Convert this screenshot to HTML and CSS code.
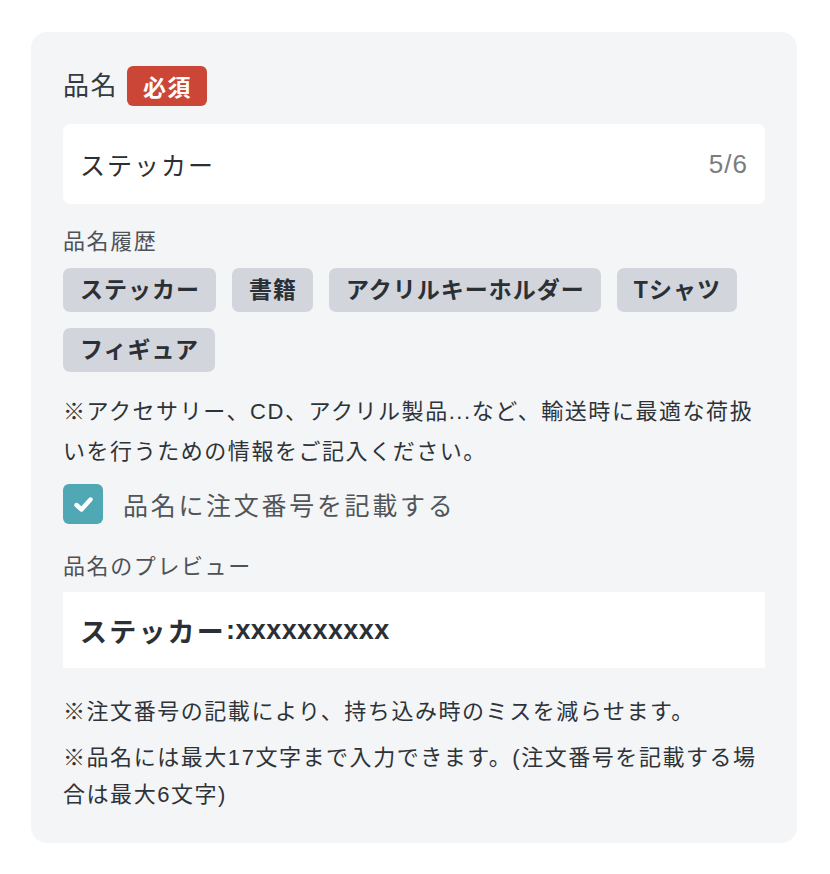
FILE: index.html
```html
<!DOCTYPE html>
<html lang="ja">
<head>
<meta charset="utf-8">
<title>品名</title>
<link rel="stylesheet" href="styles.css">
</head>
<body>
<div class="page">
  <section class="card">
    <div class="field-head">
      <span class="field-title">品名</span>
      <span class="badge">必須</span>
    </div>
    <div class="input">
      <span class="input-value">ステッカー</span>
      <span class="counter">5/6</span>
    </div>
    <div class="sub-label history-label">品名履歴</div>
    <div class="chips">
      <span class="chip">ステッカー</span>
      <span class="chip">書籍</span>
      <span class="chip">アクリルキーホルダー</span>
      <span class="chip">Tシャツ</span>
      <span class="chip">フィギュア</span>
    </div>
    <p class="note">※アクセサリー、CD、アクリル製品...など、輸送時に最適な荷扱いを行うための情報をご記入ください。</p>
    <label class="check-row">
      <span class="checkbox">
        <svg viewBox="0 0 40 40" width="40" height="40" aria-hidden="true">
          <polyline points="13.5,21 18.5,25.5 27.5,15.5" fill="none" stroke="#ffffff" stroke-width="4.4" stroke-linecap="round" stroke-linejoin="round"/>
        </svg>
      </span>
      <span class="check-label">品名に注文番号を記載する</span>
    </label>
    <div class="sub-label preview-label">品名のプレビュー</div>
    <div class="preview"><span class="preview-kana">ステッカー</span>:xxxxxxxxxx</div>
    <div class="footnotes">
      <p class="footnote">※注文番号の記載により、持ち込み時のミスを減らせます。</p>
      <p class="footnote">※品名には最大17文字まで入力できます。(注文番号を記載する場合は最大6文字)</p>
    </div>
  </section>
</div>
</body>
</html>
```

FILE: styles.css
```css
* {
  box-sizing: border-box;
}

html, body {
  margin: 0;
  padding: 0;
  background: #ffffff;
}

body {
  font-family: "Liberation Sans", "Noto Sans CJK JP", sans-serif;
  color: #2d3338;
}

.page {
  padding: 32px 0 0 31px;
}

.card {
  width: 766px;
  background: #f4f5f7;
  border-radius: 16px;
  padding: 34px 32px 30px 32px;
  display: flex;
  flex-direction: column;
}

.field-head {
  display: flex;
  align-items: center;
  height: 40px;
  gap: 9px;
}

.field-title {
  font-size: 26px;
  letter-spacing: 1.5px;
  color: #353a40;
  line-height: 40px;
}

.badge {
  display: inline-flex;
  align-items: center;
  justify-content: center;
  height: 40px;
  padding: 0 15px 0 16px;
  background: #cc4637;
  color: #ffffff;
  font-size: 23px;
  font-weight: 700;
  letter-spacing: 1.5px;
  border-radius: 6px;
}

.input {
  margin-top: 18px;
  height: 80px;
  background: #ffffff;
  border-radius: 7px;
  display: flex;
  align-items: center;
  justify-content: space-between;
  padding: 0 17px 0 17px;
}

.input-value {
  font-size: 25px;
  letter-spacing: 2px;
  color: #2b3036;
}

.counter {
  font-size: 26px;
  letter-spacing: 1px;
  color: #7a7c7f;
}

.sub-label {
  font-size: 22px;
  letter-spacing: 1.6px;
  line-height: 24px;
  color: #4d5257;
}

.history-label {
  margin-top: 26px;
}

.chips {
  margin-top: 14px;
  display: flex;
  flex-wrap: wrap;
  gap: 16px;
}

.chip {
  height: 44px;
  line-height: 44px;
  padding: 0 16px 0 17px;
  background: #d2d5dc;
  border-radius: 7px;
  font-size: 23px;
  font-weight: 700;
  letter-spacing: 1px;
  color: #2b3036;
}

.note {
  margin: 20px 0 0 0;
  font-size: 22px;
  letter-spacing: 1.55px;
  line-height: 40px;
  color: #2d3338;
}

.check-row {
  margin-top: 12px;
  display: flex;
  align-items: center;
  gap: 20px;
  height: 40px;
}

.checkbox {
  width: 40px;
  height: 40px;
  border-radius: 6px;
  background: #4fa8b3;
  display: block;
  flex: none;
}

.checkbox svg {
  display: block;
}

.check-label {
  font-size: 25px;
  letter-spacing: 2.7px;
  color: #50555a;
}

.preview-label {
  margin-top: 31px;
}

.preview {
  margin-top: 13px;
  height: 76px;
  background: #ffffff;
  display: flex;
  align-items: center;
  padding: 0 17px;
  font-size: 27px;
  font-weight: 700;
  letter-spacing: 0.4px;
  color: #2b3036;
}

.preview-kana {
  letter-spacing: 2.2px;
}

.footnotes {
  margin-top: 25px;
  display: flex;
  flex-direction: column;
  gap: 9px;
}

.footnote {
  margin: 0;
  font-size: 22px;
  letter-spacing: 1.55px;
  line-height: 37px;
  color: #2d3338;
}
```
